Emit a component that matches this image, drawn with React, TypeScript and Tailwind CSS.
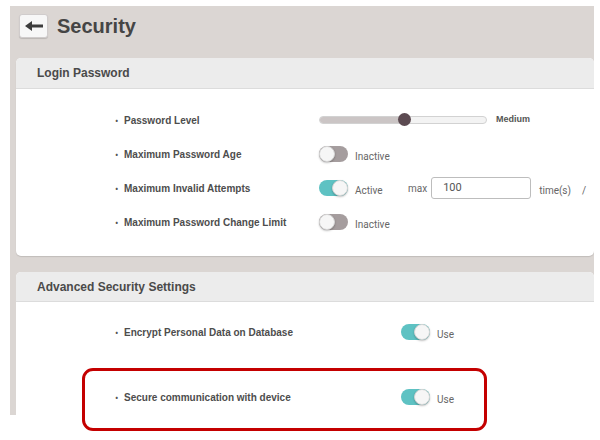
import React from "react";

const labelCls =
  "text-[10px] font-bold text-[#4d4d4d] [font-family:'Liberation_Sans',Arial,sans-serif]";
const roboto = "[font-family:Roboto,'Liberation_Sans',sans-serif]";

function Toggle({ on }: { on: boolean }) {
  return (
    <div
      className={
        "relative w-[29px] h-[16px] rounded-full shrink-0 " +
        (on ? "bg-[#5ec2c3]" : "bg-[#a59d9e]")
      }
    >
      <div
        className={
          "absolute top-0 w-[16px] h-[16px] rounded-full bg-[#f6f6f6] border border-[#d6d6d6] shadow-[0_1px_2px_rgba(0,0,0,0.25)] " +
          (on ? "right-0" : "left-0")
        }
      />
    </div>
  );
}

function Label({ text, width }: { text: string; width: string }) {
  return (
    <div className={"flex items-center shrink-0 " + width}>
      <span className="text-[9px] text-[#555] w-[9px] leading-none">•</span>
      <span className={labelCls}>{text}</span>
    </div>
  );
}

function Status({ text }: { text: string }) {
  return (
    <span className={"text-[10px] text-[#666] " + roboto}>{text}</span>
  );
}

function CardHeader({ title, h }: { title: string; h: string }) {
  return (
    <div
      className={
        "bg-[#ececec] border-b border-[#dcdcdc] flex items-center pl-[21px] " + h
      }
    >
      <span className="text-[12px] font-bold text-[#4a4a4a] [font-family:'Liberation_Sans',Arial,sans-serif]">
        {title}
      </span>
    </div>
  );
}

export default function App() {
  return (
    <div className="relative w-[600px] h-[440px] bg-white overflow-hidden">
      <div className="ml-[10px] mt-[6px] w-[584px] h-[409px] bg-[#dbd6d3] overflow-hidden pl-[6px] flex flex-col">
        {/* title row */}
        <div className="pt-[8px] pb-[20px] pl-[3px]">
          <div className="flex items-center h-[24px] gap-[9px]">
            <div className="w-[29px] h-[24px] rounded-[3px] bg-[#f7f7f7] border border-[#d0cccc] shadow-[0_1px_1px_rgba(0,0,0,0.15)] flex items-center justify-center">
              <svg width="18" height="10" viewBox="0 0 18 10">
                <polygon points="0,5 7,0 7,10" fill="#3c3c3c" />
                <rect x="6" y="3.5" width="12" height="3" fill="#3c3c3c" />
              </svg>
            </div>
            <span className="text-[20px] font-bold text-[#454545] leading-none [font-family:'Liberation_Sans',Arial,sans-serif]">
              Security
            </span>
          </div>
        </div>

        {/* card 1 */}
        <div className="w-[578px] h-[198px] shrink-0 rounded-[5px] bg-white overflow-hidden shadow-[0_1px_1px_rgba(0,0,0,0.12)]">
          <CardHeader title="Login Password" h="h-[31px]" />
          <div className="pt-[14px] pl-[99px] flex flex-col">
            <div className="flex items-center h-[34px]">
              <Label text="Password Level" width="w-[204px]" />
              <div className="relative w-[168px] h-[8px] rounded-full bg-[#f3f3f3] border border-[#d2d2d2]">
                <div className="absolute left-0 top-0 bottom-0 w-[85px] rounded-l-full bg-[#cbc5c5]" />
                <div className="absolute left-[78px] top-[-4px] w-[13px] h-[13px] rounded-full bg-[#5c4a51]" />
              </div>
              <span className="ml-[9px] text-[9px] font-bold text-[#555] [font-family:'Liberation_Sans',Arial,sans-serif]">
                Medium
              </span>
            </div>
            <div className="flex items-center h-[34px]">
              <Label text="Maximum Password Age" width="w-[204px]" />
              <Toggle on={false} />
              <div className="ml-[7px]">
                <Status text="Inactive" />
              </div>
            </div>
            <div className="flex items-center h-[34px]">
              <Label text="Maximum Invalid Attempts" width="w-[204px]" />
              <Toggle on={true} />
              <div className="ml-[7px] w-[53px]">
                <Status text="Active" />
              </div>
              <Status text="max" />
              <div className="ml-[4px] w-[100px] h-[22px] border border-[#bdbdbd] rounded-[3px] flex items-center pl-[11px]">
                <span className={"text-[11px] text-[#555] " + roboto}>100</span>
              </div>
              <div className="ml-[8px]">
                <Status text="time(s)" />
              </div>
              <div className="ml-[11px]">
                <Status text="/" />
              </div>
            </div>
            <div className="flex items-center h-[34px]">
              <Label text="Maximum Password Change Limit" width="w-[204px]" />
              <Toggle on={false} />
              <div className="ml-[7px]">
                <Status text="Inactive" />
              </div>
            </div>
          </div>
        </div>

        {/* card 2 */}
        <div className="mt-[16px] w-[578px] flex-1 shrink-0 rounded-t-[5px] bg-white overflow-hidden">
          <CardHeader title="Advanced Security Settings" h="h-[30px]" />
          <div className="pt-[13px] pl-[99px] flex flex-col gap-[31px]">
            <div className="flex items-center h-[34px]">
              <Label text="Encrypt Personal Data on Database" width="w-[286px]" />
              <Toggle on={true} />
              <div className="ml-[7px]">
                <Status text="Use" />
              </div>
            </div>
            <div className="flex items-center h-[34px]">
              <Label text="Secure communication with device" width="w-[286px]" />
              <Toggle on={true} />
              <div className="ml-[7px]">
                <Status text="Use" />
              </div>
            </div>
          </div>
        </div>
      </div>

      {/* annotation */}
      <div className="absolute left-[82px] top-[368px] w-[405px] h-[63px] border-[3px] border-[#c40000] rounded-[11px]" />
    </div>
  );
}
